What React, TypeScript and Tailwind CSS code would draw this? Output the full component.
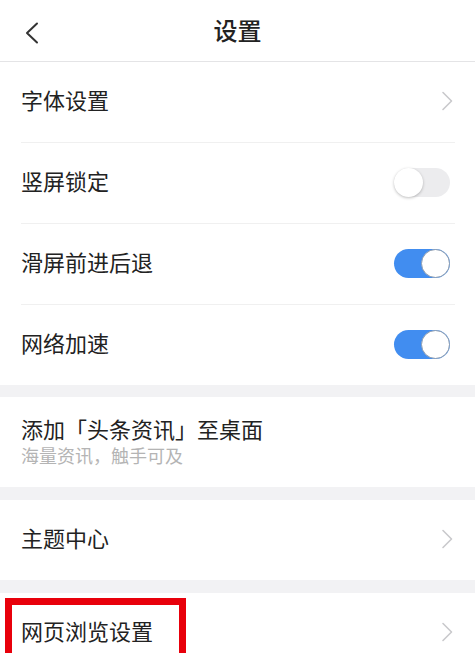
import React from "react";

const font = { fontFamily: '"Noto Sans CJK SC", "Noto Sans", sans-serif' };

function Chevron() {
  return (
    <svg width="12" height="20" viewBox="0 0 12 20" fill="none">
      <path d="M2 1.5 L10.5 10 L2 18.5" stroke="#c9c9cc" strokeWidth="1.6" strokeLinecap="round" strokeLinejoin="round" />
    </svg>
  );
}

function Toggle({ on }: { on: boolean }) {
  if (on) {
    return (
      <div className="relative w-[56px] h-[29px] rounded-full bg-[#418df0]">
        <div className="absolute right-0 top-0 w-[29px] h-[29px] rounded-full bg-white border border-[#8a9bb0]" />
      </div>
    );
  }
  return (
    <div className="relative w-[56px] h-[29px] rounded-full bg-[#ececee]">
      <div className="absolute left-0 top-0 w-[29px] h-[29px] rounded-full bg-white shadow-[0_1px_3px_rgba(0,0,0,0.25)]" />
    </div>
  );
}

function Row({ label, right, divider }: { label: string; right: React.ReactNode; divider?: boolean }) {
  return (
    <div className="bg-white">
      <div className="h-[80px] flex items-center justify-between pl-[21px] pr-[22px]">
        <span className="text-[22px] leading-[28px] text-[#222] relative -top-[3px]">{label}</span>
        <div className="relative -top-[1px]">{right}</div>
      </div>
      {divider && <div className="ml-[21px] mr-[20px] h-px bg-[#f0f0f0]" />}
    </div>
  );
}

export default function App() {
  return (
    <div className="w-[475px] h-[653px] overflow-hidden bg-[#f2f2f4]" style={font}>
      <div className="h-[62px] bg-white border-b border-[#e4e4e6] flex items-center relative">
        <div className="absolute left-[25px] top-[22px]">
          <svg width="14" height="22" viewBox="0 0 14 22" fill="none">
            <path d="M12 1.5 L2 11 L12 20.5" stroke="#333" strokeWidth="2" strokeLinecap="round" strokeLinejoin="round" />
          </svg>
        </div>
        <div className="flex-1 text-center text-[24px] leading-[30px] text-[#222] font-medium relative -top-[1px]">设置</div>
      </div>
      <Row label="字体设置" right={<Chevron />} divider />
      <Row label="竖屏锁定" right={<div className="mr-[3px]"><Toggle on={false} /></div>} divider />
      <Row label="滑屏前进后退" right={<div className="mr-[3px]"><Toggle on /></div>} divider />
      <Row label="网络加速" right={<div className="mr-[3px]"><Toggle on /></div>} />
      <div className="h-[12px]" />
      <div className="bg-white h-[90px] flex flex-col justify-center pl-[21px] gap-[2px] pb-[5px]">
        <span className="text-[22px] leading-[28px] text-[#222]">添加「头条资讯」至桌面</span>
        <span className="text-[18px] leading-[22px] text-[#b4b4b4]">海量资讯，触手可及</span>
      </div>
      <div className="h-[13px]" />
      <Row label="主题中心" right={<Chevron />} />
      <div className="h-[13px]" />
      <div className="relative">
        <Row label="网页浏览设置" right={<Chevron />} />
        <div className="absolute left-[5px] top-[5px] w-[181px] h-[100px] border-[7px] border-[#e8000b]" />
      </div>
    </div>
  );
}
